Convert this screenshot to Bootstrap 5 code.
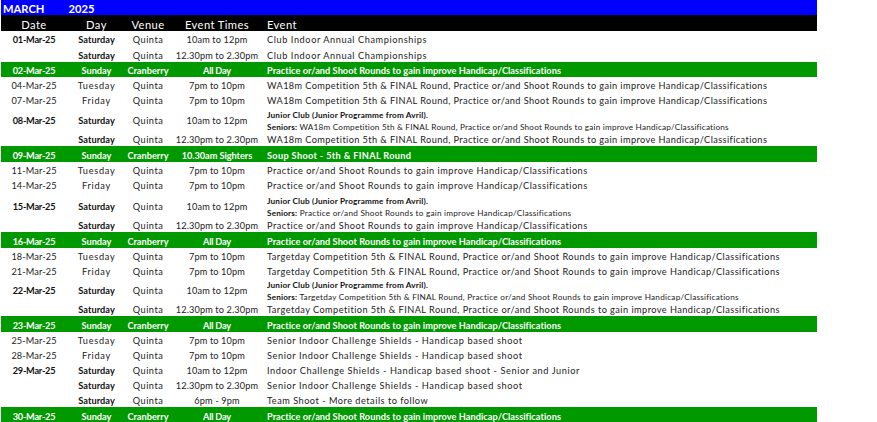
<!DOCTYPE html>
<html><head><meta charset="utf-8">
<link href="https://cdn.jsdelivr.net/npm/bootstrap@5.3.0/dist/css/bootstrap.min.css" rel="stylesheet">
<style>
html,body{background:#fff;margin:0;height:422px;overflow:hidden}
.sheet-wrap{width:816px;margin-left:1px}
.sheet{--bs-table-bg:#fff;table-layout:fixed;font-family:Lato,"Liberation Sans",sans-serif;font-size:9.2px;letter-spacing:.5px;border-collapse:collapse}
.sheet.table>*>*>*{padding:0;border:0;line-height:12px;white-space:nowrap;vertical-align:bottom;box-shadow:none;color:#222}
.c1{width:66px}.c2{width:59px}.c3{width:44px}.c4{width:94px}
.h15{height:15px}.h16{height:16px}.h23{height:23px}.h24{height:24px}.h25{height:25px}
.sheet .bar-title{--bs-table-bg:#00f}
.sheet.table>*>.bar-title>th{color:#fff;font-size:11.2px;font-weight:700;letter-spacing:0;padding-left:2px}
.year-gap{display:inline-block;width:24px}
.sheet .bar-head{--bs-table-bg:#000}
.sheet.table>*>.bar-head>th{color:#fff;font-size:11.2px;font-weight:400;letter-spacing:.4px}
.sheet .bar-green{--bs-table-bg:#090}
.sheet.table>*>.bar-green>td{color:#fff;font-weight:700;letter-spacing:0}
.sheet.table>*>*>.ev{padding-left:3px}
.sheet.table>*>*>.lift{padding-bottom:4px}
.sheet.table>*>*>td.dn{letter-spacing:.1px}
.sheet.table>*>*>td.db{font-weight:700;letter-spacing:-.25px;color:#111}
.sheet.table>*>*>td.ds{font-weight:700;letter-spacing:.08px;color:#111}
.sheet.table>*>*>td.dw{letter-spacing:.7px}
.sheet.table>*>*>td.tm{letter-spacing:.13px}
.sheet.table>*>.bar-green>td.db{color:#fff}
.sheet.table>*>.bar-green>td.ta{letter-spacing:-.2px}
.sheet.table>*>.bar-green>td.ts{letter-spacing:-.05px}
.sheet.table>*>.bar-green>td.eg{letter-spacing:.05px}
.sheet.table>*>.bar-green>td.es{letter-spacing:.33px}
.sheet.table>*>*>td.ea{letter-spacing:.4px}
.sheet.table>*>*>td.et{letter-spacing:.45px}
.sheet.table>*>*>td.ec{letter-spacing:.58px}
.two-lines{font-size:8.2px;letter-spacing:.2px;margin-bottom:-2px}
.two-lines b{color:#111;letter-spacing:.17px}
.two-wide{letter-spacing:.24px}
</style></head><body>
<div class="sheet-wrap">
<table class="table sheet mb-0">
<colgroup><col class="c1"><col class="c2"><col class="c3"><col class="c4"><col></colgroup>
<thead>
<tr class="bar-title h15"><th colspan="5">MARCH<span class="year-gap"></span>2025</th></tr>
<tr class="bar-head h16"><th class="text-center">Date</th><th class="text-center">Day</th><th class="text-center">Venue</th><th class="text-center">Event Times</th><th class="ev">Event</th></tr>
</thead>
<tbody>
<tr class="h15"><td class="text-center db">01-Mar-25</td><td class="text-center ds">Saturday</td><td class="text-center">Quinta</td><td class="text-center tm">10am to 12pm</td><td class="ev ec">Club Indoor Annual Championships</td></tr>
<tr class="h16"><td></td><td class="text-center ds">Saturday</td><td class="text-center">Quinta</td><td class="text-center tm">12.30pm to 2.30pm</td><td class="ev ec">Club Indoor Annual Championships</td></tr>
<tr class="bar-green h15"><td class="text-center db">02-Mar-25</td><td class="text-center">Sunday</td><td class="text-center">Cranberry</td><td class="text-center ta">All Day</td><td class="ev eg">Practice or/and Shoot Rounds to gain improve Handicap/Classifications</td></tr>
<tr class="h15"><td class="text-center dn">04-Mar-25</td><td class="text-center dw">Tuesday</td><td class="text-center">Quinta</td><td class="text-center tm">7pm to 10pm</td><td class="ev ea">WA18m Competition 5th &amp; FINAL Round, Practice or/and Shoot Rounds to gain improve Handicap/Classifications</td></tr>
<tr class="h15"><td class="text-center dn">07-Mar-25</td><td class="text-center dw">Friday</td><td class="text-center">Quinta</td><td class="text-center tm">7pm to 10pm</td><td class="ev ea">WA18m Competition 5th &amp; FINAL Round, Practice or/and Shoot Rounds to gain improve Handicap/Classifications</td></tr>
<tr class="h24"><td class="text-center db lift">08-Mar-25</td><td class="text-center ds lift">Saturday</td><td class="text-center lift">Quinta</td><td class="text-center tm lift">10am to 12pm</td><td class="ev"><div class="two-lines"><b>Junior Club (Junior Programme from Avril).</b><br><b>Seniors:</b> WA18m Competition 5th &amp; FINAL Round, Practice or/and Shoot Rounds to gain improve Handicap/Classifications</div></td></tr>
<tr class="h15"><td></td><td class="text-center ds">Saturday</td><td class="text-center">Quinta</td><td class="text-center tm">12.30pm to 2.30pm</td><td class="ev ea">WA18m Competition 5th &amp; FINAL Round, Practice or/and Shoot Rounds to gain improve Handicap/Classifications</td></tr>
<tr class="bar-green h16"><td class="text-center db">09-Mar-25</td><td class="text-center">Sunday</td><td class="text-center">Cranberry</td><td class="text-center ts">10.30am Sighters</td><td class="ev es">Soup Shoot - 5th &amp; FINAL Round</td></tr>
<tr class="h15"><td class="text-center dn">11-Mar-25</td><td class="text-center dw">Tuesday</td><td class="text-center">Quinta</td><td class="text-center tm">7pm to 10pm</td><td class="ev">Practice or/and Shoot Rounds to gain improve Handicap/Classifications</td></tr>
<tr class="h15"><td class="text-center dn">14-Mar-25</td><td class="text-center dw">Friday</td><td class="text-center">Quinta</td><td class="text-center tm">7pm to 10pm</td><td class="ev">Practice or/and Shoot Rounds to gain improve Handicap/Classifications</td></tr>
<tr class="h25"><td class="text-center db lift">15-Mar-25</td><td class="text-center ds lift">Saturday</td><td class="text-center lift">Quinta</td><td class="text-center tm lift">10am to 12pm</td><td class="ev"><div class="two-lines two-wide"><b>Junior Club (Junior Programme from Avril).</b><br><b>Seniors:</b> Practice or/and Shoot Rounds to gain improve Handicap/Classifications</div></td></tr>
<tr class="h15"><td></td><td class="text-center ds">Saturday</td><td class="text-center">Quinta</td><td class="text-center tm">12.30pm to 2.30pm</td><td class="ev">Practice or/and Shoot Rounds to gain improve Handicap/Classifications</td></tr>
<tr class="bar-green h16"><td class="text-center db">16-Mar-25</td><td class="text-center">Sunday</td><td class="text-center">Cranberry</td><td class="text-center ta">All Day</td><td class="ev eg">Practice or/and Shoot Rounds to gain improve Handicap/Classifications</td></tr>
<tr class="h15"><td class="text-center dn">18-Mar-25</td><td class="text-center dw">Tuesday</td><td class="text-center">Quinta</td><td class="text-center tm">7pm to 10pm</td><td class="ev et">Targetday Competition 5th &amp; FINAL Round, Practice or/and Shoot Rounds to gain improve Handicap/Classifications</td></tr>
<tr class="h15"><td class="text-center dn">21-Mar-25</td><td class="text-center dw">Friday</td><td class="text-center">Quinta</td><td class="text-center tm">7pm to 10pm</td><td class="ev et">Targetday Competition 5th &amp; FINAL Round, Practice or/and Shoot Rounds to gain improve Handicap/Classifications</td></tr>
<tr class="h23"><td class="text-center db lift">22-Mar-25</td><td class="text-center ds lift">Saturday</td><td class="text-center lift">Quinta</td><td class="text-center tm lift">10am to 12pm</td><td class="ev"><div class="two-lines two-wide"><b>Junior Club (Junior Programme from Avril).</b><br><b>Seniors:</b> Targetday Competition 5th &amp; FINAL Round, Practice or/and Shoot Rounds to gain improve Handicap/Classifications</div></td></tr>
<tr class="h15"><td></td><td class="text-center ds">Saturday</td><td class="text-center">Quinta</td><td class="text-center tm">12.30pm to 2.30pm</td><td class="ev et">Targetday Competition 5th &amp; FINAL Round, Practice or/and Shoot Rounds to gain improve Handicap/Classifications</td></tr>
<tr class="bar-green h16"><td class="text-center db">23-Mar-25</td><td class="text-center">Sunday</td><td class="text-center">Cranberry</td><td class="text-center ta">All Day</td><td class="ev eg">Practice or/and Shoot Rounds to gain improve Handicap/Classifications</td></tr>
<tr class="h15"><td class="text-center dn">25-Mar-25</td><td class="text-center dw">Tuesday</td><td class="text-center">Quinta</td><td class="text-center tm">7pm to 10pm</td><td class="ev ec">Senior Indoor Challenge Shields - Handicap based shoot</td></tr>
<tr class="h15"><td class="text-center dn">28-Mar-25</td><td class="text-center dw">Friday</td><td class="text-center">Quinta</td><td class="text-center tm">7pm to 10pm</td><td class="ev ec">Senior Indoor Challenge Shields - Handicap based shoot</td></tr>
<tr class="h15"><td class="text-center db">29-Mar-25</td><td class="text-center ds">Saturday</td><td class="text-center">Quinta</td><td class="text-center tm">10am to 12pm</td><td class="ev ec">Indoor Challenge Shields - Handicap based shoot - Senior and Junior</td></tr>
<tr class="h15"><td></td><td class="text-center ds">Saturday</td><td class="text-center">Quinta</td><td class="text-center tm">12.30pm to 2.30pm</td><td class="ev ec">Senior Indoor Challenge Shields - Handicap based shoot</td></tr>
<tr class="h15"><td></td><td class="text-center ds">Saturday</td><td class="text-center">Quinta</td><td class="text-center tm">6pm - 9pm</td><td class="ev">Team Shoot - More details to follow</td></tr>
<tr class="bar-green h16"><td class="text-center db">30-Mar-25</td><td class="text-center">Sunday</td><td class="text-center">Cranberry</td><td class="text-center ta">All Day</td><td class="ev eg">Practice or/and Shoot Rounds to gain improve Handicap/Classifications</td></tr>
</tbody>
</table>
</div>
<script src="https://cdn.jsdelivr.net/npm/bootstrap@5.3.0/dist/js/bootstrap.bundle.min.js"></script>
</body></html>
